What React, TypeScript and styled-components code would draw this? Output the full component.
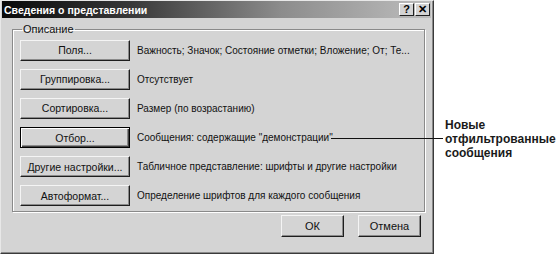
import styled, { createGlobalStyle } from 'styled-components';

const GlobalStyle = createGlobalStyle`
  html, body {
    margin: 0;
    padding: 0;
    background: #ffffff;
  }
  * {
    box-sizing: border-box;
  }
`;

const Page = styled.div`
  position: relative;
  width: 560px;
  height: 256px;
  display: flex;
  align-items: flex-start;
  font-family: "Liberation Sans", Arial, sans-serif;
  font-size: 11px;
  color: #111;
`;

const Window = styled.div`
  width: 434px;
  height: 254px;
  background: #d4d4d4;
  border: 1px solid;
  border-color: #e8e8e8 #3a3a3a #3a3a3a #e8e8e8;
  box-shadow: inset -1px -1px 0 #8a8a8a;
  padding: 0 2px 2px 1px;
  display: flex;
  flex-direction: column;
`;

const TitleBar = styled.div`
  height: 17px;
  display: flex;
  align-items: center;
  justify-content: space-between;
  padding: 0 1px 0 2px;
  background: linear-gradient(90deg, #0a0a0a 0%, #383838 30%, #8c8c8c 65%, #bdbdbd 100%);
`;

const Title = styled.div`
  color: #ffffff;
  font-weight: bold;
  font-size: 10.5px;
`;

const TitleButtons = styled.div`
  display: flex;
  gap: 1px;
`;

const TitleButton = styled.div`
  width: 15px;
  height: 13px;
  background: #d4d4d4;
  border: 1px solid;
  border-color: #ffffff #202020 #202020 #ffffff;
  display: flex;
  align-items: center;
  justify-content: center;
  font-weight: bold;
  font-size: 11px;
  line-height: 1;
  color: #000;
`;

const Body = styled.div`
  flex: 1;
  display: flex;
  flex-direction: column;
  padding: 5px 6px 0 10px;
`;

const Group = styled.fieldset`
  margin: 0;
  padding: 4px 8px 0 7px;
  border: 1px solid #8a8a8a;
  box-shadow: 1px 1px 0 #ffffff, inset 1px 1px 0 #ffffff;
  height: 189px;
`;

const Legend = styled.legend`
  padding: 0 1px;
  margin-left: 2px;
  font-size: 11px;
  line-height: 13px;
`;

const Rows = styled.div`
  display: grid;
  grid-template-columns: 110px 1fr;
  column-gap: 7px;
  row-gap: 8.6px;
  align-items: center;
`;

const Button = styled.div<{ $default?: boolean }>`
  height: 20.5px;
  display: flex;
  align-items: center;
  justify-content: center;
  background: #d4d4d4;
  white-space: nowrap;
  font-size: 10.5px;
  border: 1px solid;
  border-color: ${p => (p.$default ? '#000000' : '#f4f4f4 #1e1e1e #1e1e1e #f4f4f4')};
  box-shadow: ${p =>
    p.$default
      ? 'inset 1px 1px 0 #ffffff, inset -1px -1px 0 #404040, inset -2px -2px 0 #8a8a8a'
      : 'inset -1px -1px 0 #8a8a8a'};
`;

const Desc = styled.div`
  white-space: nowrap;
  font-size: 10px;
`;

const Footer = styled.div`
  display: flex;
  justify-content: flex-end;
  gap: 14px;
  padding: 3px 4px 0 0;
`;

const FooterButton = styled(Button)`
  width: 63px;
  height: 22px;
  font-size: 11px;
`;

const Callout = styled.div`
  padding: 118px 0 0 11px;
  font-size: 12px;
  font-weight: bold;
  line-height: 14px;
  color: #1a1a1a;
`;

const Leader = styled.div`
  position: absolute;
  left: 331px;
  top: 138px;
  width: 112px;
  height: 1px;
  background: #111;
`;

const rows = [
  { label: 'Поля...', text: 'Важность; Значок; Состояние отметки; Вложение; От; Те...' },
  { label: 'Группировка...', text: 'Отсутствует' },
  { label: 'Сортировка...', text: 'Размер (по возрастанию)' },
  { label: 'Отбор...', text: 'Сообщения: содержащие "демонстрации"', isDefault: true },
  { label: 'Другие настройки...', text: 'Табличное представление: шрифты и другие настройки' },
  { label: 'Автоформат...', text: 'Определение шрифтов для каждого сообщения' },
];

export default function App() {
  return (
    <Page>
      <GlobalStyle />
      <Window>
        <TitleBar>
          <Title>Сведения о представлении</Title>
          <TitleButtons>
            <TitleButton>?</TitleButton>
            <TitleButton>✕</TitleButton>
          </TitleButtons>
        </TitleBar>
        <Body>
          <Group>
            <Legend>Описание</Legend>
            <Rows>
              {rows.flatMap(r => [
                <Button key={r.label} $default={r.isDefault}>{r.label}</Button>,
                <Desc key={r.label + '-t'}>{r.text}</Desc>,
              ])}
            </Rows>
          </Group>
          <Footer>
            <FooterButton>ОК</FooterButton>
            <FooterButton>Отмена</FooterButton>
          </Footer>
        </Body>
      </Window>
      <Callout>
        Новые
        <br />
        отфильтрованные
        <br />
        сообщения
      </Callout>
      <Leader />
    </Page>
  );
}
